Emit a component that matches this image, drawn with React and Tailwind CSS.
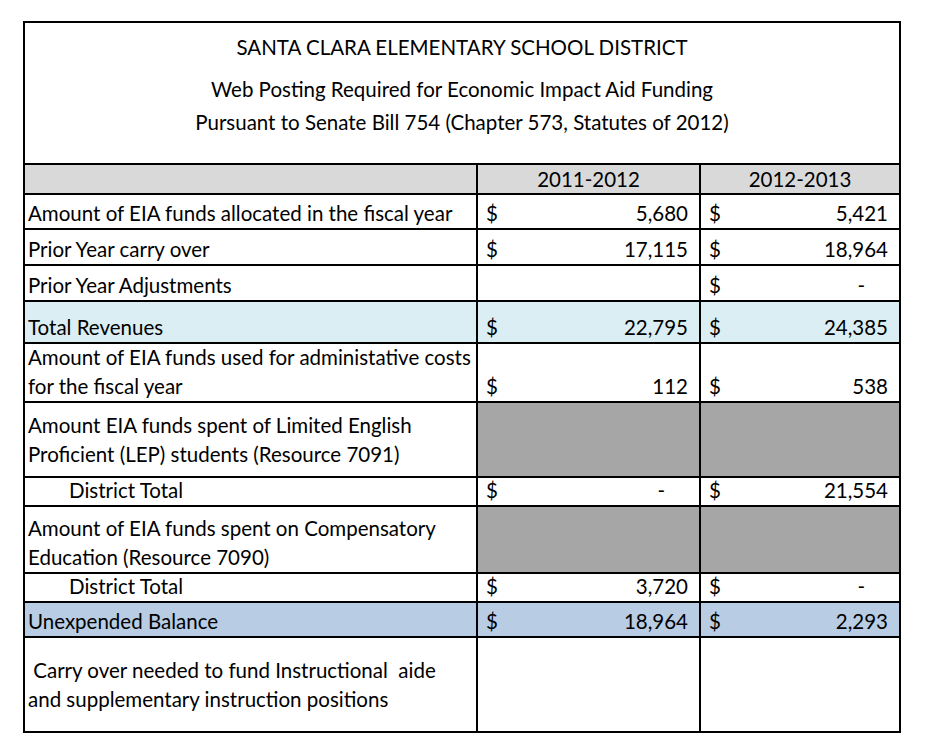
import React from "react";

const rows = [
  { label: "Amount of EIA funds allocated in the fiscal year", h: "h-[33px]", a: "5,680", b: "5,421" },
  { label: "Prior Year carry over", h: "h-[34px]", a: "17,115", b: "18,964" },
  { label: "Prior Year Adjustments", h: "h-[34px]", a: null, b: "-" },
  { label: "Total Revenues", h: "h-[40px]", a: "22,795", b: "24,385", bg: "bg-[#daeef3]" },
  {
    label: ["Amount of EIA funds used for administative costs", "for the fiscal year"],
    h: "h-[57px]",
    a: "112",
    b: "538",
  },
  {
    label: ["Amount EIA funds spent of Limited English", "Proficient (LEP) students (Resource 7091)"],
    h: "h-[73px]",
    gray: true,
    center: true,
  },
  { label: "District Total", indent: true, h: "h-[27px]", a: "-", b: "21,554" },
  {
    label: ["Amount of EIA funds spent on Compensatory", "Education (Resource 7090)"],
    h: "h-[65px]",
    gray: true,
  },
  { label: "District Total", indent: true, h: "h-[27px]", a: "3,720", b: "-" },
  { label: "Unexpended Balance", h: "h-[33px]", a: "18,964", b: "2,293", bg: "bg-[#b8cce4]" },
  {
    label: [" Carry over needed to fund Instructional  aide", "and supplementary instruction positions"],
    h: "h-[93px]",
    center: true,
    empty: true,
  },
];

// accounting style cell: $ on the left, amount on the right
const MoneyCell = ({ value, bg, h }) => (
  <div className={`${bg || "bg-white"} ${h} flex items-end`}>
    {value !== null && value !== undefined && (
      <div className="flex w-full justify-between pl-[8px] pr-[11px]">
        <span>$</span>
        <span className={value === "-" ? "pr-[23px]" : ""}>{value}</span>
      </div>
    )}
  </div>
);

export default function App() {
  return (
    <div
      className="w-[930px] h-[751px] bg-white text-black text-[20.5px] leading-[29px] pt-[21px] pl-[23px]"
      style={{ fontFamily: "Lato, 'Open Sans', sans-serif" }}
    >
      <div className="w-[878px] grid grid-cols-[451px_221px_198px] gap-[2px] bg-black p-[2px]">
        {/* title block */}
        <div className="col-span-3 h-[140px] bg-white flex flex-col items-center">
          <div className="mt-[10px]">SANTA CLARA ELEMENTARY SCHOOL DISTRICT</div>
          <div className="mt-[13px]">Web Posting Required for Economic Impact Aid Funding</div>
          <div className="mt-[4px]">Pursuant to Senate Bill 754 (Chapter 573, Statutes of 2012)</div>
        </div>

        {/* column headings */}
        <div className="h-[28px] bg-[#d9d9d9]" />
        <div className="h-[28px] bg-[#d9d9d9] flex items-center justify-center">2011-2012</div>
        <div className="h-[28px] bg-[#d9d9d9] flex items-center justify-center">2012-2013</div>

        {rows.map((r, i) => {
          const lines = Array.isArray(r.label) ? r.label : [r.label];
          return (
            <React.Fragment key={i}>
              <div
                className={`${r.bg || "bg-white"} ${r.h} flex flex-col ${
                  r.center ? "justify-center" : "justify-end"
                } ${r.indent ? "pl-[44px]" : "pl-[3px]"} whitespace-pre`}
              >
                {lines.map((l, j) => (
                  <div key={j}>{l}</div>
                ))}
              </div>
              {r.gray ? (
                <>
                  <div className={`${r.h} bg-[#a6a6a6]`} />
                  <div className={`${r.h} bg-[#a6a6a6]`} />
                </>
              ) : r.empty ? (
                <>
                  <div className={`${r.h} bg-white`} />
                  <div className={`${r.h} bg-white`} />
                </>
              ) : (
                <>
                  <MoneyCell value={r.a} bg={r.bg} h={r.h} />
                  <MoneyCell value={r.b} bg={r.bg} h={r.h} />
                </>
              )}
            </React.Fragment>
          );
        })}
      </div>
    </div>
  );
}
